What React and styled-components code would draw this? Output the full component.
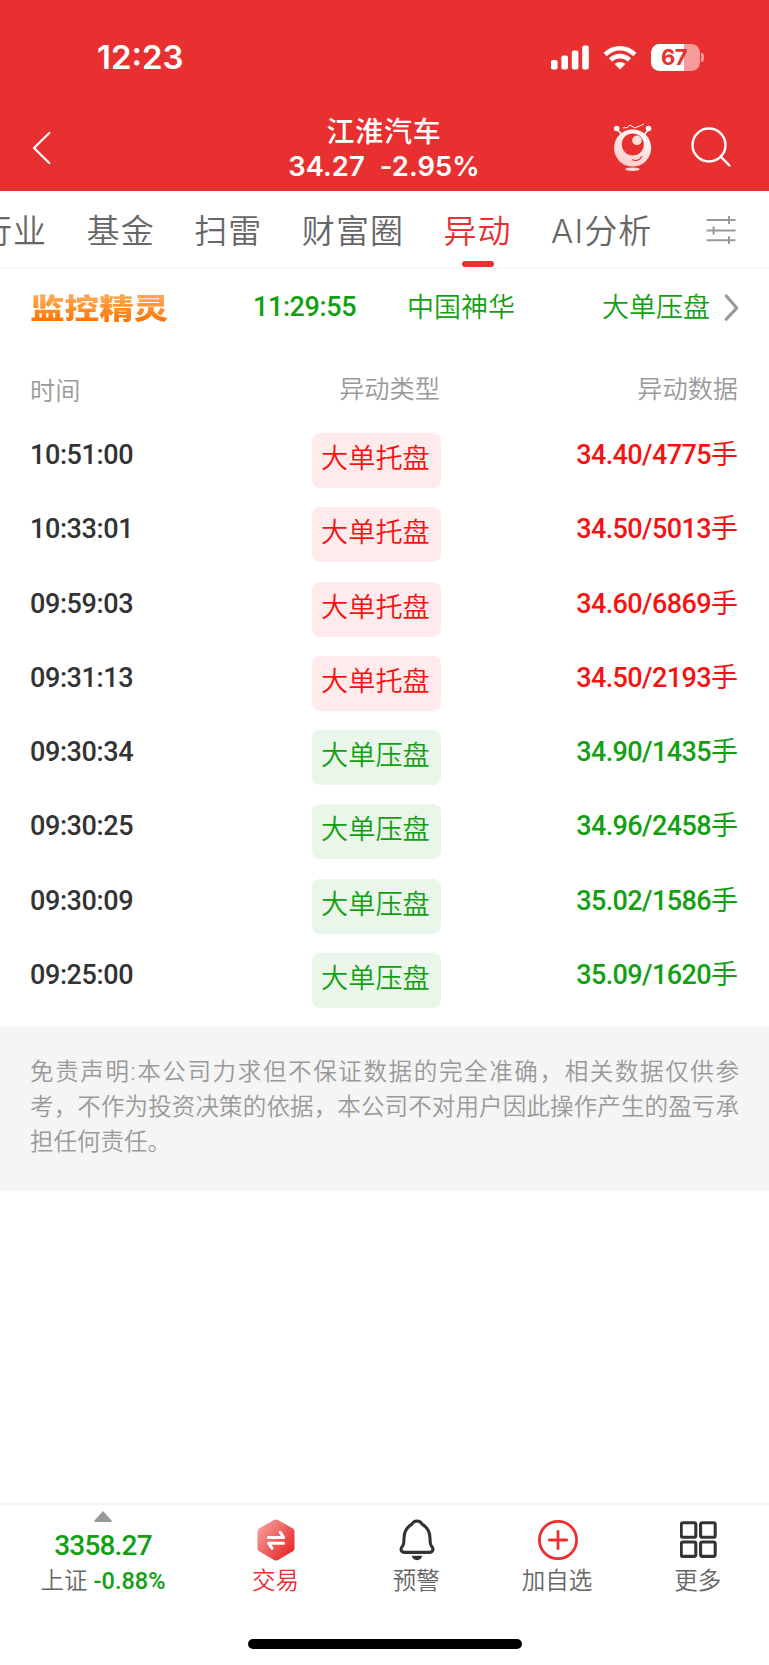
import React, { useState } from "react";
import styled, { createGlobalStyle } from "styled-components";

const RED = "#e93030";
const GREEN = "#12a012";

const tabs = ["行业", "基金", "扫雷", "财富圈", "异动", "AI分析"];

const records = [
    { time: "10:51:00", type: "大单托盘", data: "34.40/4775", up: true },
    { time: "10:33:01", type: "大单托盘", data: "34.50/5013", up: true },
    { time: "09:59:03", type: "大单托盘", data: "34.60/6869", up: true },
    { time: "09:31:13", type: "大单托盘", data: "34.50/2193", up: true },
    { time: "09:30:34", type: "大单压盘", data: "34.90/1435", up: false },
    { time: "09:30:25", type: "大单压盘", data: "34.96/2458", up: false },
    { time: "09:30:09", type: "大单压盘", data: "35.02/1586", up: false },
    { time: "09:25:00", type: "大单压盘", data: "35.09/1620", up: false },
];

const SignalIcon = () => (
    <svg width="38" height="25" viewBox="0 0 38 25" fill="#fff">
        <rect x="0" y="15" width="6.6" height="9.5" rx="2" />
        <rect x="10.4" y="10.5" width="6.6" height="14" rx="2" />
        <rect x="20.8" y="5.5" width="6.6" height="19" rx="2" />
        <rect x="31.2" y="0.5" width="6.6" height="24" rx="2" />
    </svg>
);

const WifiIcon = () => (
    <svg width="34" height="25" viewBox="0 0 34 25" fill="none" stroke="#fff" strokeWidth="4.6">
        <path d="M2.2 9.6C10.4 1.1 23.6 1.1 31.8 9.6" />
        <path d="M7.6 15C12.9 9.8 21.1 9.8 26.4 15" />
        <path d="M17 24.6L11.6 19.1C14.6 16.3 19.4 16.3 22.4 19.1Z" fill="#fff" stroke="none" />
    </svg>
);

const BackIcon = () => (
    <svg width="20" height="34" viewBox="0 0 20 34" fill="none" stroke="#fff" strokeWidth="2.2" strokeLinecap="round" strokeLinejoin="round">
        <path d="M17.3 2L2 17L17.3 32" />
    </svg>
);

const RobotIcon = () => (
    <svg width="40" height="50" viewBox="0 0 40 50">
        <defs>
            <linearGradient id="robot" x1="0.8" y1="0" x2="0.25" y2="1">
                <stop offset="0" stopColor="#fff" />
                <stop offset="1" stopColor="#ffc9c9" />
            </linearGradient>
        </defs>
        <g stroke="#fff" strokeWidth="1.4" fill="none">
            <path d="M4 7L9 13M36 7L31 13" />
            <path d="M10 6L14.5 5.5L17 3L22 6L31 2" strokeWidth="1" />
        </g>
        <circle cx="3.7" cy="6.5" r="2.8" fill="#fff" />
        <circle cx="35.5" cy="6.5" r="2.8" fill="#fff" />
        <circle cx="19.6" cy="26" r="18.6" fill="url(#robot)" />
        <circle cx="19.8" cy="22.4" r="11" fill={RED} />
        <circle cx="24" cy="18.4" r="4.8" fill="#ffdede" />
        <path d="M19.5 37.8C23 39.4 27.2 38 28.8 34.5" stroke={RED} strokeWidth="1.2" fill="none" strokeLinecap="round" />
        <ellipse cx="19.5" cy="47.3" rx="7.2" ry="1.7" fill="#ffdcdc" />
    </svg>
);

const SearchIcon = () => (
    <svg width="40" height="40" viewBox="0 0 40 40" fill="none" stroke="#fff" strokeWidth="2.4" strokeLinecap="round">
        <circle cx="18" cy="18" r="16.5" />
        <path d="M29.7 29.7L38.5 38.5" />
    </svg>
);

const FilterIcon = () => (
    <svg width="30" height="29" viewBox="0 -1 30 29" fill="none" stroke="#999" strokeWidth="2">
        <path d="M0.5 4H29.5M0.5 14.5H29.5M0.5 24.2H29.5" />
        <path d="M23 0V8M7.6 10.5V18.5M23 20.2V28" />
    </svg>
);

const ArrowIcon = () => (
    <svg width="16" height="28" viewBox="0 0 16 28" fill="none" stroke="#999" strokeWidth="3.2" strokeLinecap="round" strokeLinejoin="round">
        <path d="M2.3 3L12.8 15L2.3 26.2" />
    </svg>
);

const TradeIcon = () => (
    <svg width="38" height="42" viewBox="0 0 38 42">
        <defs>
            <linearGradient id="trade" x1="0" y1="0.1" x2="0.9" y2="0.9">
                <stop offset="0" stopColor="#f7a3a3" />
                <stop offset="1" stopColor="#e92525" />
            </linearGradient>
        </defs>
        <path d="M17 .9Q19 -.1 21 .9L35.5 9.2Q37.5 10.4 37.5 12.6V29.2Q37.5 31.4 35.5 32.6L21 40.9Q19 41.9 17 40.9L2.5 32.6Q.5 31.4 .5 29.2V12.6Q.5 10.4 2.5 9.2Z" fill="url(#trade)" />
        <g stroke="#fff" strokeWidth="3" fill="none" strokeLinecap="round" strokeLinejoin="round">
            <path d="M11.5 18.4H26.6L23.2 13.3" />
            <path d="M26.6 24.3H11.5L15 29.2" />
        </g>
    </svg>
);

const BellIcon = () => (
    <svg width="36" height="42" viewBox="0 0 36 42">
        <path d="M18 2C21 2 22.4 3.6 23.3 5.4C28.2 8.2 30.8 12.6 31 19C31.1 23.4 31.1 25.5 32.4 27C35.2 30 33.9 33.4 30.5 33.4H5.5C2.1 33.4 .8 30 3.6 27C4.9 25.5 4.9 23.4 5 19C5.2 12.6 7.8 8.2 12.7 5.4C13.6 3.6 15 2 18 2Z" fill="none" stroke="#333" strokeWidth="3.1" />
        <path d="M12.6 36.8H23.4C22.7 39.6 20.6 41.2 18 41.2C15.4 41.2 13.3 39.6 12.6 36.8Z" fill="#333" />
    </svg>
);

const AddIcon = () => (
    <svg width="42" height="42" viewBox="0 0 42 42" fill="none" stroke="#ee2f2f" strokeWidth="2.8" strokeLinecap="round">
        <circle cx="21" cy="21" r="18.6" />
        <path d="M12.3 21H29.7M21 12.3V29.7" />
    </svg>
);

const MoreIcon = () => (
    <svg width="38" height="42" viewBox="0 0 38 42" fill="none" stroke="#333" strokeWidth="3.1">
        <rect x="1.2" y="3.8" width="14.6" height="14.4" rx="1.8" />
        <rect x="20.6" y="3.8" width="14.6" height="14.4" rx="1.8" />
        <rect x="1.2" y="23" width="14.6" height="14.4" rx="1.8" />
        <rect x="20.6" y="23" width="14.6" height="14.4" rx="1.8" />
    </svg>
);

const actions = [
    { label: "交易", icon: <TradeIcon />, color: RED },
    { label: "预警", icon: <BellIcon /> },
    { label: "加自选", icon: <AddIcon /> },
    { label: "更多", icon: <MoreIcon /> },
];

export default function App() {
    const [active, setActive] = useState("异动");

    return (
        <Page>
            <GlobalStyle />
            <Header>
                <StatusBar>
                    <Clock>12:23</Clock>
                    <StatusIcons>
                        <SignalIcon />
                        <WifiIcon />
                        <Battery><BatteryBody>67</BatteryBody><BatteryTip /></Battery>
                    </StatusIcons>
                </StatusBar>
                <TitleBar>
                    <BackButton><BackIcon /></BackButton>
                    <Title>
                        <StockName>江淮汽车</StockName>
                        <StockPrice><span>34.27</span><span>-2.95%</span></StockPrice>
                    </Title>
                    <HeaderTools>
                        <RobotIcon />
                        <SearchIcon />
                    </HeaderTools>
                </TitleBar>
            </Header>

            <TabBar>
                <TabList>
                    {tabs.map((tab) => (
                        <Tab key={tab} $active={tab === active} onClick={() => setActive(tab)}>{tab}</Tab>
                    ))}
                </TabList>
                <FilterIcon />
            </TabBar>

            <Monitor>
                <MonitorLogo>监控精灵</MonitorLogo>
                <MonitorTime>11:29:55</MonitorTime>
                <MonitorText>中国神华</MonitorText>
                <MonitorText>大单压盘</MonitorText>
                <ArrowIcon />
            </Monitor>

            <TableHead>
                <HeadTime>时间</HeadTime>
                <HeadType>异动类型</HeadType>
                <HeadData>异动数据</HeadData>
            </TableHead>
            {records.map((item) => (
                <Row key={item.time}>
                    <Time>{item.time}</Time>
                    <BadgeCell><Badge $up={item.up}>{item.type}</Badge></BadgeCell>
                    <Data $up={item.up}>{item.data}<Unit>手</Unit></Data>
                </Row>
            ))}

            <Disclaimer>
                免责声明:本公司力求但不保证数据的完全准确，相关数据仅供参考，不作为投资决策的依据，本公司不对用户因此操作产生的盈亏承担任何责任。
            </Disclaimer>

            <BottomBar>
                <IndexBox>
                    <Triangle />
                    <IndexValue>3358.27</IndexValue>
                    <IndexLine>上证<IndexChange>-0.88%</IndexChange></IndexLine>
                </IndexBox>
                {actions.map((item) => (
                    <Action key={item.label} $color={item.color}>
                        {item.icon}
                        <ActionLabel>{item.label}</ActionLabel>
                    </Action>
                ))}
            </BottomBar>
            <HomeArea><HomeIndicator /></HomeArea>
        </Page>
    );
}

const GlobalStyle = createGlobalStyle`
    * {
        box-sizing: border-box;
    }

    body {
        margin: 0;
        background: #fff;
    }

    svg {
        display: block;
        flex: none;
    }
`

const Page = styled.div`
    width: 769px;
    height: 1665px;
    display: flex;
    flex-direction: column;
    overflow: hidden;
    background: #fff;
    font-family: Roboto, "Noto Sans CJK SC", sans-serif;
    font-weight: 350;
    white-space: nowrap;
`

const Header = styled.header`
    height: 191px;
    flex: none;
    background: ${RED};
    color: #fff;
`

const StatusBar = styled.div`
    height: 115px;
    padding: 0 65px 0 97px;
    display: flex;
    justify-content: space-between;
    align-items: center;
`

const Clock = styled.div`
    margin-top: -1px;
    font-family: Inter, sans-serif;
    font-size: 33px;
    font-weight: 600;
    line-height: 40px;
`

const StatusIcons = styled.div`
    display: flex;
    align-items: center;
    gap: 14px;
`

const Battery = styled.div`
    display: flex;
    align-items: center;
    gap: 1px;
`

const BatteryBody = styled.div`
    width: 49px;
    height: 27px;
    padding-right: 3px;
    border-radius: 8.5px;
    background: linear-gradient(90deg, #fff 66.5%, #f69a9a 66.5%);
    color: ${RED};
    font-family: Inter, sans-serif;
    font-size: 22px;
    font-weight: 700;
    line-height: 27px;
    letter-spacing: -0.5px;
    text-align: center;
`

const BatteryTip = styled.div`
    width: 3px;
    height: 9px;
    border-radius: 0 4px 4px 0;
    background: #f69a9a;
`

const TitleBar = styled.div`
    height: 76px;
    padding: 0 38px 0 32px;
    display: grid;
    grid-template-columns: 1fr auto 1fr;
`

const BackButton = styled.div`
    padding-top: 16px;
`

const Title = styled.div`
    margin-left: 5px;
    padding-top: 1px;
    text-align: center;
`

const StockName = styled.div`
    font-size: 28px;
    font-weight: 500;
    line-height: 34px;
    letter-spacing: 0.8px;
`

const StockPrice = styled.div`
    display: flex;
    justify-content: center;
    gap: 15px;
    font-family: Inter, sans-serif;
    font-size: 27.3px;
    font-weight: 600;
    line-height: 34px;
    letter-spacing: 0.1px;
`

const HeaderTools = styled.div`
    display: flex;
    justify-self: end;
    align-items: flex-start;
    gap: 38px;
    padding-top: 7px;
    & > :last-child { margin-top: 5px; }
`

const TabBar = styled.nav`
    height: 78px;
    flex: none;
    padding-right: 33px;
    display: flex;
    justify-content: space-between;
    align-items: center;
    border-bottom: 2px solid #f7f7f8;
`

const TabList = styled.div`
    display: flex;
    gap: 39.4px;
    margin-left: -21px;
`

const Tab = styled.div`
    height: 76px;
    display: flex;
    flex-direction: column;
    align-items: center;
    color: ${(p) => (p.$active ? RED : "#666")};
    font-family: Inter, "Noto Sans CJK SC", sans-serif;
    font-size: 33px;
    line-height: 80px;
    letter-spacing: 1.1px;

    &::after {
        content: "";
        width: 32px;
        height: 6px;
        margin-top: -10px;
        flex: none;
        border-radius: 3px;
        background: ${(p) => (p.$active ? RED : "transparent")};
    }
`

const Monitor = styled.div`
    height: 76px;
    flex: none;
    padding-left: 30px;
    display: grid;
    grid-template-columns: 223px 154px 195px 122px auto;
    align-items: center;
    color: ${GREEN};
    font-size: 27px;
`

const MonitorLogo = styled.div`
    width: 112px;
    margin-top: 6px;
    font-size: 28px;
    font-weight: 900;
    line-height: 34px;
    color: transparent;
    background: linear-gradient(#ffa64d 15%, #ff7300 85%);
    background-clip: text;
    transform: scaleX(1.235);
    transform-origin: left;
`

const MonitorTime = styled.span`
    font-weight: 500;
    letter-spacing: -0.4px;
`

const MonitorText = styled.span`
    margin-top: -4px;
`

const columns = `
    padding: 0 31px 0 30px;
    display: grid;
    grid-template-columns: 228px 237px 1fr;
    flex: none;
`

const TableHead = styled.div`
    ${columns}
    height: 88px;
    color: #999;
    font-size: 25.2px;
    line-height: 90px;
`

const HeadTime = styled.div`
    padding-top: 2px;
`

const HeadType = styled.div`
    padding-left: 26px;
    text-align: center;
`

const HeadData = styled.div`
    text-align: right;
`

const Row = styled.div`
    ${columns}
    height: 74.25px;
    font-size: 27px;
    line-height: 45px;
`

const Time = styled.div`
    color: #333;
    font-weight: 500;
    letter-spacing: -0.4px;
`

const BadgeCell = styled.div`
    display: flex;
    justify-content: center;
    align-items: flex-start;
`

const Badge = styled.div`
    width: 129px;
    height: 55px;
    padding-left: 9px;
    border-radius: 8px;
    background: ${(p) => (p.$up ? "#ffebeb" : "#eaf6ea")};
    color: ${(p) => (p.$up ? "#f71212" : GREEN)};
    font-size: 27.2px;
    line-height: 53px;
`

const Data = styled.div`
    color: ${(p) => (p.$up ? "#f71212" : GREEN)};
    font-weight: 500;
    letter-spacing: -0.6px;
    text-align: right;
`

const Unit = styled.span`
    font-weight: 400;
    letter-spacing: 0;
`

const Disclaimer = styled.div`
    height: 164px;
    flex: none;
    padding: 28px 30px 0;
    background: #f5f5f5;
    color: #999;
    font-size: 23.5px;
    line-height: 35.2px;
    text-align: justify;
    white-space: normal;
`

const BottomBar = styled.footer`
    height: 118px;
    flex: none;
    margin-top: auto;
    border-top: 2px solid #f5f5f5;
    display: flex;
`

const IndexBox = styled.div`
    width: 205px;
    padding: 6px 0 0 1px;
    display: flex;
    flex-direction: column;
    align-items: center;
`

const Triangle = styled.div`
    width: 18px;
    height: 11px;
    background: #999;
    clip-path: polygon(50% 0, 100% 90%, 94% 100%, 6% 100%, 0 90%);
`

const IndexValue = styled.div`
    color: ${GREEN};
    font-size: 28px;
    font-weight: 500;
    line-height: 47px;
    letter-spacing: -0.8px;
`

const IndexLine = styled.div`
    color: #666;
    font-size: 23.5px;
    line-height: 24px;
`

const IndexChange = styled.span`
    margin-left: 6px;
    color: ${GREEN};
    font-weight: 500;
`

const Action = styled.div`
    width: 140.8px;
    padding-top: 14px;
    display: flex;
    flex-direction: column;
    align-items: center;
    color: ${(p) => p.$color || "#666"};

    svg {
        margin-left: 2px;
    }
`

const ActionLabel = styled.div`
    margin-top: 8px;
    font-size: 23.5px;
    line-height: 24px;
`

const HomeArea = styled.div`
    height: 44px;
    flex: none;
    padding-top: 18px;
    display: flex;
    justify-content: center;
`

const HomeIndicator = styled.div`
    width: 274px;
    height: 10px;
    border-radius: 5px;
    background: #000;
`
